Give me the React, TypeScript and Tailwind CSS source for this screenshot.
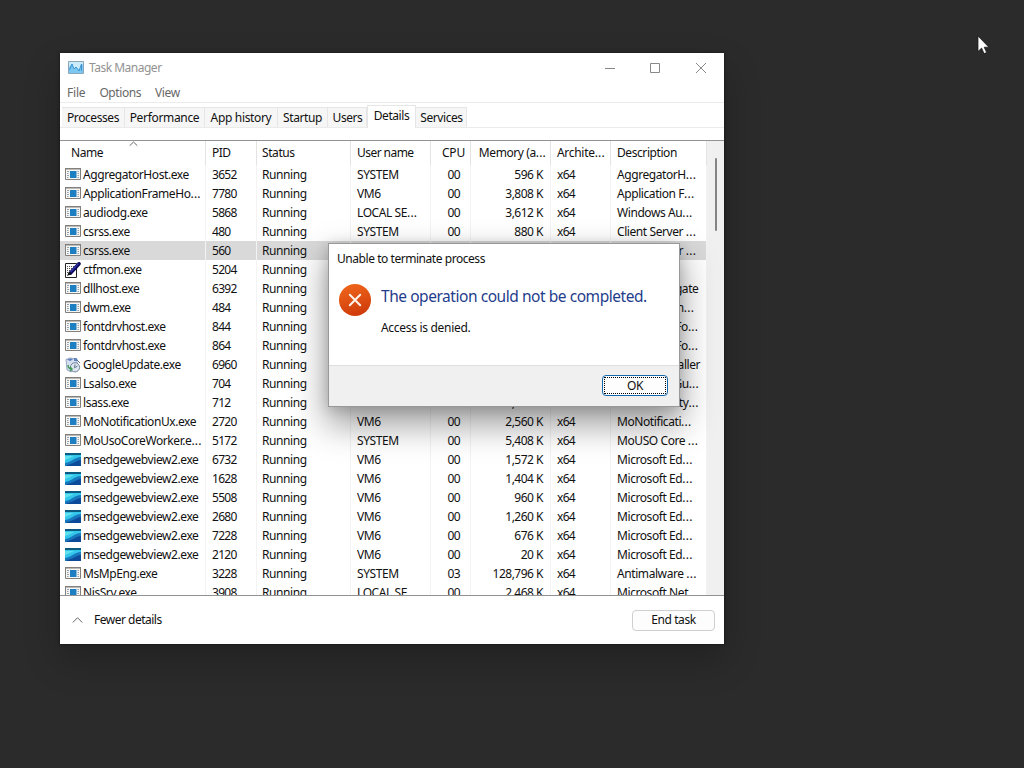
import React from "react";

type Kind = "app" | "pen" | "google" | "edge";
type Row = [Kind, string, string, string, string, string, string];

const rows: Row[] = [
  ["app", "AggregatorHost.exe", "3652", "SYSTEM", "00", "596 K", "AggregatorH..."],
  ["app", "ApplicationFrameHo...", "7780", "VM6", "00", "3,808 K", "Application F..."],
  ["app", "audiodg.exe", "5868", "LOCAL SE...", "00", "3,612 K", "Windows Au..."],
  ["app", "csrss.exe", "480", "SYSTEM", "00", "880 K", "Client Server ..."],
  ["app", "csrss.exe", "560", "SYSTEM", "00", "900 K", "Client Server ..."],
  ["pen", "ctfmon.exe", "5204", "VM6", "00", "2,980 K", "CTF Loader"],
  ["app", "dllhost.exe", "6392", "VM6", "00", "1,360 K", "COM Surrogate"],
  ["app", "dwm.exe", "484", "DWM-1", "00", "9,804 K", "Desktop Win..."],
  ["app", "fontdrvhost.exe", "844", "UMFD-0", "00", "1,004 K", "Usermode Fo..."],
  ["app", "fontdrvhost.exe", "864", "UMFD-1", "00", "1,204 K", "Usermode Fo..."],
  ["google", "GoogleUpdate.exe", "6960", "SYSTEM", "00", "1,532 K", "Google Installer"],
  ["app", "Lsalso.exe", "704", "SYSTEM", "00", "896 K", "Credential Gu..."],
  ["app", "lsass.exe", "712", "SYSTEM", "00", "5,380 K", "Local Security..."],
  ["app", "MoNotificationUx.exe", "2720", "VM6", "00", "2,560 K", "MoNotificati..."],
  ["app", "MoUsoCoreWorker.e...", "5172", "SYSTEM", "00", "5,408 K", "MoUSO Core ..."],
  ["edge", "msedgewebview2.exe", "6732", "VM6", "00", "1,572 K", "Microsoft Ed..."],
  ["edge", "msedgewebview2.exe", "1628", "VM6", "00", "1,404 K", "Microsoft Ed..."],
  ["edge", "msedgewebview2.exe", "5508", "VM6", "00", "960 K", "Microsoft Ed..."],
  ["edge", "msedgewebview2.exe", "2680", "VM6", "00", "1,260 K", "Microsoft Ed..."],
  ["edge", "msedgewebview2.exe", "7228", "VM6", "00", "676 K", "Microsoft Ed..."],
  ["edge", "msedgewebview2.exe", "2120", "VM6", "00", "20 K", "Microsoft Ed..."],
  ["app", "MsMpEng.exe", "3228", "SYSTEM", "03", "128,796 K", "Antimalware ..."],
  ["app", "NisSrv.exe", "3908", "LOCAL SE...", "00", "2,468 K", "Microsoft Net..."],
];

const cols = "grid grid-cols-[146px_51px_94px_80px_40px_80px_60px_96px]";

// Truncated labels keep their three dots slightly apart.
function Label({ text }: { text: string }) {
  if (!text.endsWith("...")) return <span>{text}</span>;
  return (
    <span>
      {text.slice(0, -3)}
      <span className="tracking-[0.2px]">...</span>
    </span>
  );
}

function ProcessIcon({ kind }: { kind: Kind }) {
  if (kind === "edge")
    return (
      <svg className="h-[13px] w-4 shrink-0" viewBox="0 0 16 13">
        <path fill="#33c6ea" d="M0 0h16v13H0z" />
        <path fill="#0c5a80" d="M0 0h16v2H0z" />
        <path fill="#62e0ec" d="M0 3h9C6 4 4 6 0 7z" />
        <path fill="#1878bd" d="M16 4C9 4.500 7 9 0 10v3h16z" />
        <path fill="#0d4a9a" d="M16 7c-5 .5-7 4-14 5v1h14z" />
      </svg>
    );
  if (kind === "pen")
    return (
      <svg className="h-4 w-4 shrink-0" viewBox="0 0 16 16">
        <path fill="#fff" stroke="#222" d="M.5 1.500h11v14H.5z" />
        <path stroke="#555" strokeDasharray="1 1" d="M2 4.500h8M2 6.500h7M2 8.500h6M2 10.500h4" />
        <path stroke="#0a0a5c" strokeWidth="3.600" strokeLinecap="round" d="M14 1.800 5.500 11" />
        <path stroke="#3434b4" strokeWidth="1.200" d="M13.500 1.500 5.500 10" />
        <path fill="#111" d="M4 9.500 6.800 12 2 14z" />
      </svg>
    );
  if (kind === "google")
    return (
      <svg className="h-4 w-4 shrink-0" viewBox="0 0 16 16">
        <path fill="#d5dff0" stroke="#8495b5" strokeWidth=".8" d="M1 2.500 5 1l7 1v9l-6 4-4-2z" />
        <path fill="#5e81bf" d="M2 2.500 6 1.500l2 1L5 4zM9 1l3 .3V4L9 4z" />
        <circle cx="10" cy="10.300" r="4.600" fill="#dce5ee" stroke="#74869e" />
        <path fill="none" stroke="#459c5c" strokeWidth="1.500" d="M3 8c0 3 2 4 4 4M5 10l2 2-2 2" />
        <path fill="none" stroke="#5f7590" d="m10 7.500-.5 3.300L12.500 9M12 3l3 3" />
      </svg>
    );
  return (
    <svg className="-mt-px h-3 w-4 shrink-0" viewBox="0 0 16 12">
      <path fill="#f6f6f4" stroke="#827f7d" d="M.5.500h15v11H.5z" />
      <path fill="#827f7d" d="M0 0h16v1.500H0z" />
      <path fill="#1d7fc1" d="M5 3h6.500v7H5z" />
      <path stroke="#93a1ac" d="M2 3.500h2M2 5.500h1.500M2 7.500h2M2 9.500h1.500M12.500 3.500H14M12.500 5.500H14M12.500 7.500H14M12.500 9.500H14" />
    </svg>
  );
}

function Header() {
  const cell = "flex items-center border-r border-[#e3e3e3]";
  return (
    <div className={`${cols} h-[24px] shrink-0`}>
      <div className={`${cell} relative pl-[11px]`}>
        Name
        <svg className="absolute left-[69px] top-0 h-[6px] w-[9px]" viewBox="0 0 9 6">
          <path fill="none" stroke="#666" d="m.7 4.700 3.800-3.700 3.800 3.700" />
        </svg>
      </div>
      <div className={`${cell} pl-[6px] tracking-[-0.5px]`}>PID</div>
      <div className={`${cell} pl-[5px]`}>Status</div>
      <div className={`${cell} pl-[6px] tracking-[-0.55px]`}>User name</div>
      <div className={`${cell} justify-end pr-[5px] tracking-[-0.2px]`}>CPU</div>
      <div className={`${cell} justify-end pr-[4px]`}><Label text="Memory (a..." /></div>
      <div className={`${cell} pl-[6px] tracking-[-0.3px]`}><Label text="Archite..." /></div>
      <div className={`${cell} pl-[6px]`}>Description</div>
    </div>
  );
}

function ProcessRow({ row, selected }: { row: Row; selected: boolean }) {
  const [kind, name, pid, user, cpu, memory, description] = row;
  const cell = "flex items-center border-r border-[#f3f3f3]";
  return (
    <div className={`${cols} h-[19px] shrink-0 ${selected ? "bg-[#d9d9d9]" : ""}`}>
      <div className={`${cell} gap-[2px] pl-[5px]`}>
        <ProcessIcon kind={kind} />
        <Label text={name} />
      </div>
      <div className={`${cell} pl-[6px] tracking-[-0.7px]`}>{pid}</div>
      <div className={`${cell} pl-[5px]`}>Running</div>
      <div className={`${cell} pl-[6px]`}><Label text={user} /></div>
      <div className={`${cell} justify-end pr-[9px] tracking-[-0.6px]`}><span className="mr-px">{cpu}</span></div>
      <div className={`${cell} justify-end pr-[7px] tracking-[-0.5px]`}>{memory}</div>
      <div className={`${cell} pl-[6px] tracking-[-0.7px]`}>x64</div>
      <div className={`${cell} pl-[6px]`}><Label text={description} /></div>
    </div>
  );
}

function Tabs() {
  const tab = "flex h-[20px] items-center justify-center border border-b-0 border-l-0 border-[#e6e6e6] bg-[#f6f6f6]";
  return (
    <div className="flex h-[25px] items-end border-b border-[#ebebeb] pl-[2px]">
      <div className={`${tab} w-[63px] border-l`}>Processes</div>
      <div className={`${tab} w-[80px] tracking-[-0.33px]`}>Performance</div>
      <div className={`${tab} w-[73px] tracking-[-0.33px]`}>App history</div>
      <div className={`${tab} w-[50px]`}>Startup</div>
      <div className={`${tab} w-[39px] pl-px`}>Users</div>
      <div className="-mb-px flex h-[23px] w-[49px] items-center justify-center border border-b-0 border-[#e6e6e6] bg-white pb-[2px]">
        Details
      </div>
      <div className={`${tab} w-[51px] pl-px`}>Services</div>
    </div>
  );
}

function Dialog() {
  return (
    <div className="absolute left-[328px] top-[243px] flex h-[164px] w-[352px] flex-col border border-[#999] bg-white shadow-[0_16px_32px_2px_rgba(0,0,0,0.38),0_2px_12px_rgba(0,0,0,0.16)]">
      <div className="flex h-[30px] items-center pl-[8px] tracking-[-0.45px]">Unable to terminate process</div>
      <div className="flex flex-1 gap-[10px] pl-[10px] pt-[10px]">
        <svg className="h-8 w-8 shrink-0" viewBox="0 0 32 32">
          <defs>
            <linearGradient id="err" x1="0" y1="0" x2="0.3" y2="1">
              <stop offset="0" stopColor="#f2691c" />
              <stop offset="1" stopColor="#d13d0c" />
            </linearGradient>
          </defs>
          <circle cx="16" cy="16" r="16" fill="url(#err)" />
          <path stroke="#fff4ea" strokeWidth="2" strokeLinecap="round" d="m10.800 10.800 10.400 10.400M21.200 10.800 10.800 21.200" />
        </svg>
        <div className="flex flex-col whitespace-nowrap">
          <div className="h-[24px] text-[15.5px] leading-[24px] tracking-[-0.45px] text-[#1f3d8c]">
            The operation could not be completed.
          </div>
          <div className="mt-[12px] leading-[16px] tracking-[-0.3px]">Access is denied.</div>
        </div>
      </div>
      <div className="flex h-[41px] items-center justify-end border-t border-[#dfdfdf] bg-[#f0f0f0] pr-[11px]">
        <button className="-mt-px flex h-[21px] w-[66px] rounded-[4px] border border-[#1467a8] bg-[#fdfdfd] p-px">
          <span className="flex flex-1 items-center justify-center border border-dotted border-black">OK</span>
        </button>
      </div>
    </div>
  );
}

export default function App() {
  return (
    <div className="relative h-[768px] w-[1024px] overflow-hidden whitespace-nowrap bg-[#2b2b2b] pl-[60px] pt-[53px] font-['Noto_Sans','Open_Sans',sans-serif] text-[12px] leading-[16px] tracking-[-0.42px] text-[#111]">
      <div className="flex h-[591px] w-[664px] flex-col bg-white shadow-[0_16px_34px_rgba(0,0,0,0.22),0_0_3px_rgba(0,0,0,0.5)]">
        <div className="flex h-[29px] items-center text-[#929292]">
          <svg className="ml-[8px] mr-[5px] h-[13px] w-[16px]" viewBox="0 0 16 13">
            <path fill="#c9ebfb" stroke="#8ba6b8" d="M.5.500h15v12H.5z" />
            <path fill="#7cc8f2" d="M1 6l3-3 2 5 2-2 3 3 3-6 1 1v8H1z" />
            <path fill="none" stroke="#3d95cf" d="M1.500 9 4 3l2 5 2-2 3 4 2.500-7v7" />
          </svg>
          <span className="mt-px tracking-[-0.5px]">Task Manager</span>
          <div className="ml-auto flex items-center text-[#888]">
            <svg className="h-[12px] w-[90px]" viewBox="0 0 90 12">
              <path fill="none" stroke="currentColor" d="M0 6.500h10M45.500 1.500h9v9h-9z" />
            </svg>
            <svg className="mr-[17px] h-[12px] w-[12px]" viewBox="0 0 12 12">
              <path stroke="currentColor" d="m1 1 10 10M11 1 1 11" />
            </svg>
          </div>
        </div>
        <div className="flex h-[21px] items-center gap-[14px] border-b border-[#ececec] pl-[7px] pt-[2px] text-[#686868]">
          <span className="tracking-[-0.2px]">File</span>
          <span>Options</span>
          <span>View</span>
        </div>
        <Tabs />
        <div className="h-[12px] shrink-0" />
        <div className="flex h-[456px] shrink-0 overflow-hidden border-y border-[#929292]">
          <div className="flex w-[647px] shrink-0 flex-col overflow-hidden">
            <Header />
            {rows.map((row, i) => (
              <ProcessRow key={i} row={row} selected={i === 4} />
            ))}
          </div>
          <div className="flex w-[17px] justify-center bg-[#f0f0f0] pt-[17px]">
            <div className="h-[73px] w-[2px] rounded-full bg-[#858585]" />
          </div>
        </div>
        <div className="flex flex-1 items-center pl-[12px] pr-[9px]">
          <svg className="mr-[11px] h-[8px] w-[11px]" viewBox="0 0 11 8">
            <path fill="none" stroke="#666" d="m.8 6.500 4.700-4.800 4.700 4.800" />
          </svg>
          <span className="tracking-[-0.5px]">Fewer details</span>
          <button className="ml-auto h-[21px] w-[83px] rounded-[4px] border border-[#cfcfcf] bg-[#fdfdfd]">End task</button>
        </div>
      </div>
      <Dialog />
      <svg className="absolute left-[977px] top-[35px] h-[20px] w-[13px]" viewBox="0 0 13 20">
        <path fill="#fff" stroke="#111" strokeWidth=".7" d="M1 1v15.500l3.600-3.400 2.500 5.500 2.500-1.100-2.400-5.300h4.600z" />
      </svg>
    </div>
  );
}
